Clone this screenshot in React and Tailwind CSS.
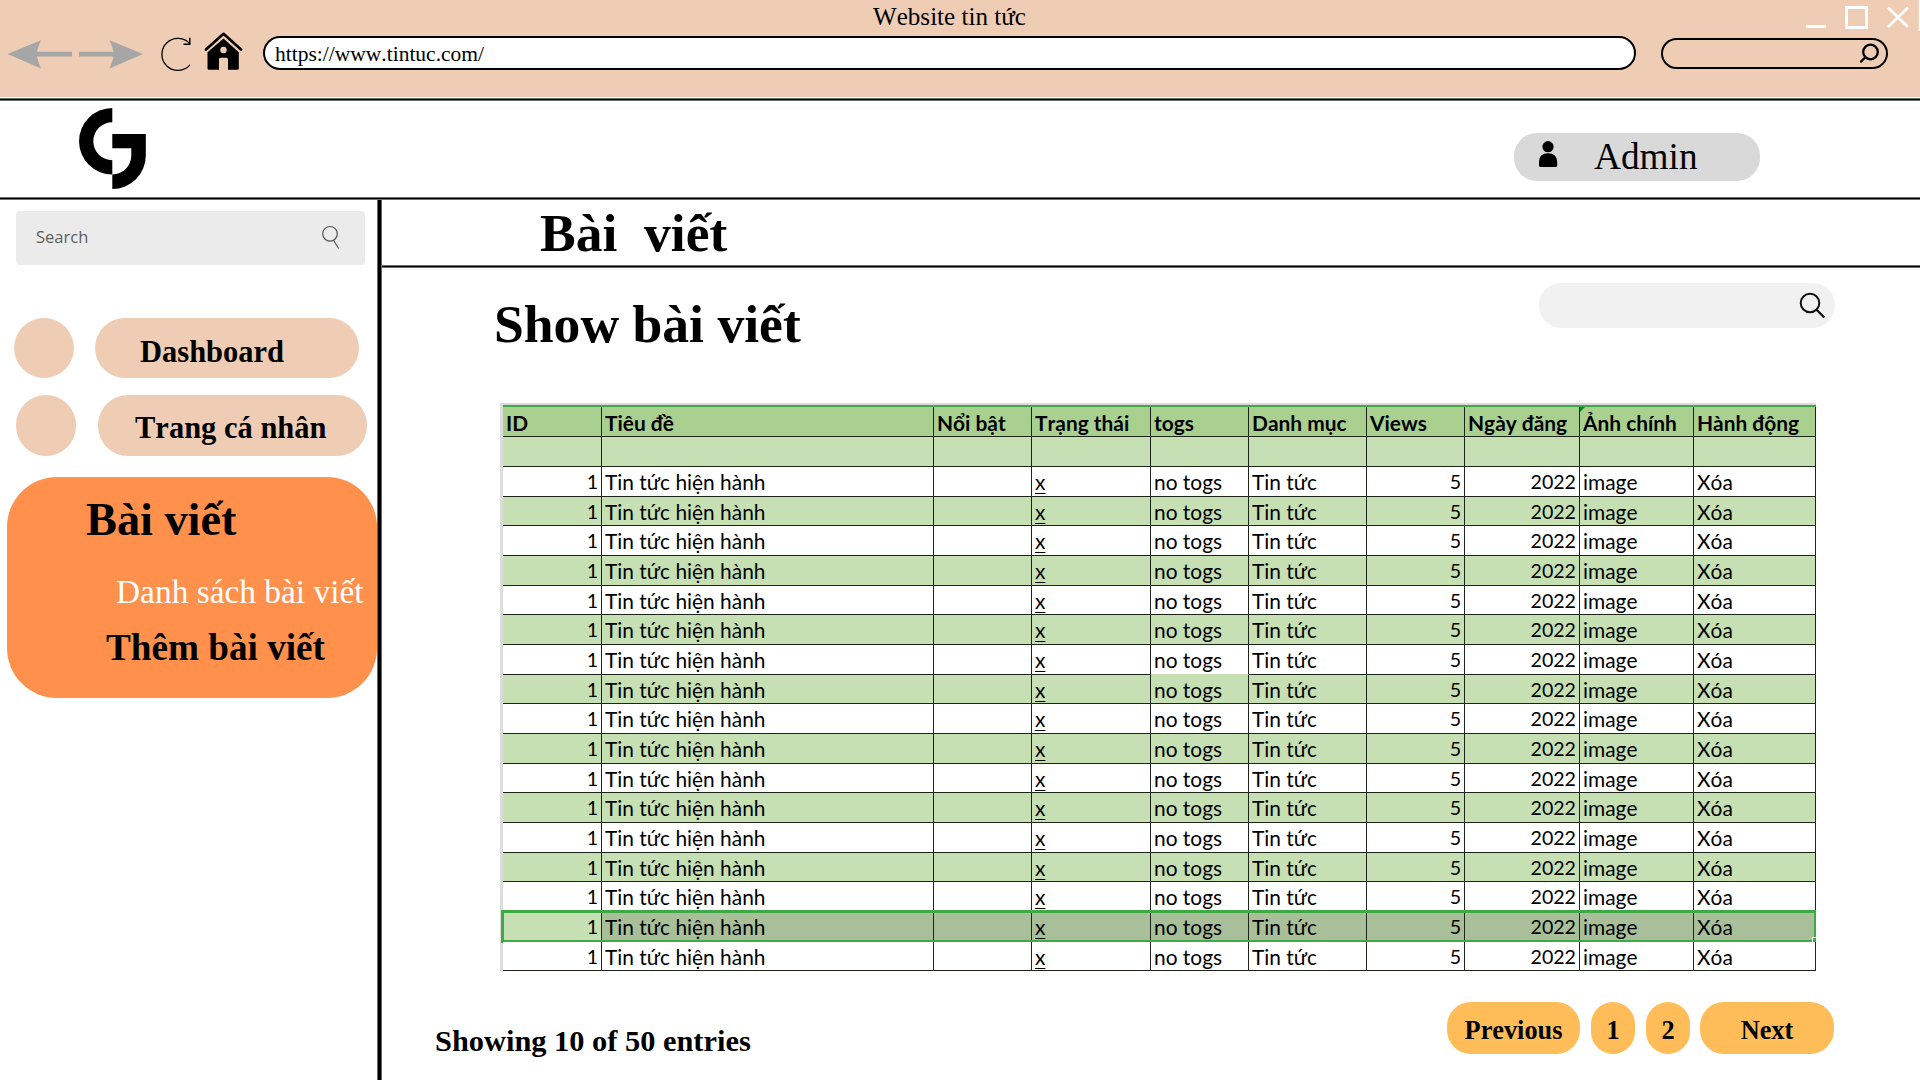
import React from "react";

const columns = [
  { label: "ID", value: "1", align: "text-right text-[19.6px]" },
  { label: "Tiêu đề", value: "Tin tức hiện hành" },
  { label: "Nổi bật", value: "" },
  { label: "Trạng thái", value: "x", underline: true },
  { label: "togs", value: "no togs" },
  { label: "Danh mục", value: "Tin tức" },
  { label: "Views", value: "5", align: "text-right text-[19.6px]" },
  { label: "Ngày đăng", value: "2022", align: "text-right text-[19.6px]" },
  { label: "Ảnh chính", value: "image", note: true },
  { label: "Hành động", value: "Xóa" },
];

const ROWS = 17;
const SELECTED = 15;
const GRID = "grid grid-rows-[100%] grid-cols-[99px_332px_98px_119px_98px_118px_98px_115px_114px_122px]";

// The "togs" cell above row 8 has no visible bottom rule.
const isOpenCell = (row, col) => row === 6 && col === 4;

function HLine() {
  return <div className="h-[3px] w-full shrink-0 border-y border-[#6b706b] bg-black" />;
}

function BrowserBar() {
  return (
    <div className="relative h-[97px] shrink-0 bg-[#efcdb5]">
      <div className="flex h-[36px] justify-between">
        <div className="w-[873px]" />
        <div className="pt-[3px] text-[25.1px] leading-[28px] whitespace-nowrap">Website tin tức</div>
        <svg className="ml-auto h-[34px] w-[120px]" viewBox="1800 0 120 34" fill="none" stroke="#fff">
          <path d="M1806 26.5h20" strokeWidth="3" />
          <rect x="1846.5" y="7.5" width="20" height="20" strokeWidth="3" />
          <path d="M1888 7.5l20 19.5M1908 7.5l-20 19.5" strokeWidth="2.6" />
          <path d="M1919.5 0v31" strokeWidth="1.4" />
        </svg>
      </div>
      <div className="flex h-[34px] items-center">
        <svg className="h-[44px] w-[263px] shrink-0" viewBox="0 30.5 263 44">
          <g fill="#a6a6a6">
            <path d="M7.500 53.500L41 39.800Q38 46 37 51.200H72V56H37Q38 61.500 41 68Z" />
            <path d="M143 53.500L109.500 39.800Q112.500 46 113.500 51.200H79V56H113.500Q112.500 61.500 109.500 68Z" />
          </g>
          <path d="M190 43.400A16 16 0 1 0 190 64.400" fill="none" stroke="#000" strokeWidth="1.3" />
          <path d="M189.800 37.300V43.800H183.500" fill="none" stroke="#000" strokeWidth="1.4" />
          <path d="M206 49L223.500 33.300L241 49" fill="none" stroke="#000" strokeWidth="2.700" strokeLinecap="round" strokeLinejoin="round" />
          <path fillRule="evenodd" d="M223.500 38L238.800 51.700V68Q238.800 69.300 237.500 69.300H228V59Q228 57.300 226.300 57.300H220.700Q219 57.300 219 59V69.300H209Q207.500 69.300 207.500 68V51.700ZM223.500 46.300a3.200 3.200 0 1 0 0 6.400a3.200 3.200 0 1 0 0-6.400Z" />
        </svg>
        <div className="h-[34px] w-[1373px] shrink-0 rounded-full border-2 border-black bg-white pl-[10px] text-[21.5px] leading-[33px]">
          https://www.tintuc.com/
        </div>
        <div className="ml-[25px] flex h-[31px] w-[227px] items-center justify-end rounded-full border-2 border-black pr-[5px]">
          <svg className="h-[22px] w-[22px]" viewBox="1859 42 22 22" fill="none" stroke="#000" strokeWidth="2.300" strokeLinecap="round">
            <circle cx="1870.500" cy="52" r="7.300" />
            <path d="M1865.300 57.300L1861 61.600" />
          </svg>
        </div>
      </div>
    </div>
  );
}

function SiteHeader() {
  return (
    <div className="flex h-[96px] shrink-0 items-start">
      <svg className="mt-[7px] ml-[79px] h-[81px] w-[67px]" viewBox="79 108 67 81">
        <path d="M112.300 108A33.250 33.250 0 0 0 112.300 174.500V160.200A19 19 0 0 1 112.300 122.200Z" />
        <path d="M112.300 134H145.800V155.500A33.500 33.500 0 0 1 112.300 189V174.500A19 19 0 0 0 131.300 155.500V148.300H112.300Z" />
      </svg>
      <div className="mt-[32px] ml-[1368px] flex h-[48px] w-[246px] rounded-[23px] bg-[#d9d9d9]">
        <svg className="mt-[7px] ml-[25px] h-[28px] w-[19px]" viewBox="1539 140 19 28">
          <circle cx="1548" cy="146.700" r="5.600" />
          <path d="M1539 165.500V162Q1539 153.200 1548 153.200T1557.200 162V165.500Q1557.200 167 1555.700 167H1540.500Q1539 167 1539 165.500Z" />
        </svg>
        <div className="ml-[36px] text-[37.300px] leading-[48px]">Admin</div>
      </div>
    </div>
  );
}

function Sidebar() {
  return (
    <div className="flex w-[377px] shrink-0 flex-col">
      <div className="mt-[11px] ml-[16px] flex h-[54px] w-[349px] items-center justify-between rounded-[4px] bg-[#ebebeb] pr-[25px] pl-[20px]">
        <span className="pb-[2px] font-['Open_Sans',sans-serif] text-[16.500px] leading-[24px] text-[#5e5e5e]">Search</span>
        <svg className="h-[26px] w-[20px]" viewBox="320 225.500 20 26" fill="none" stroke="#555" strokeWidth="1.200">
          <circle cx="330" cy="234.300" r="7.300" />
          <path d="M333.500 240.800L338.700 249" />
        </svg>
      </div>
      <div className="mt-[53px] flex h-[60px] font-bold">
        <div className="ml-[14px] h-[60px] w-[60px] rounded-full bg-[#efcdb5]" />
        <div className="ml-[21px] w-[264px] rounded-[30px] bg-[#efcdb5] pl-[45px] text-[30.500px] leading-[68px]">Dashboard</div>
      </div>
      <div className="mt-[17px] flex h-[61px] font-bold">
        <div className="ml-[16px] h-[61px] w-[60px] rounded-full bg-[#efcdb5]" />
        <div className="ml-[22px] w-[269px] rounded-[30px] bg-[#efcdb5] pl-[37px] text-[30.500px] leading-[67px] whitespace-nowrap">Trang cá nhân</div>
      </div>
      <div className="mt-[21px] ml-[7px] flex h-[221px] w-[370px] flex-col rounded-[50px] bg-[#ff914d] whitespace-nowrap">
        <div className="mt-[13px] ml-[79px] text-[46.300px] leading-[60px] font-bold">Bài viết</div>
        <div className="mt-[22px] ml-[109px] text-[33.400px] leading-[40px] text-white">Danh sách bài viết</div>
        <div className="mt-[16px] ml-[99px] text-[37.200px] leading-[40px] font-bold">Thêm bài viết</div>
      </div>
    </div>
  );
}

function ArticlesTable() {
  return (
    <div className="w-[1316px] border-t-2 border-l-[3px] border-[#dcdcdc]">
      <div className="relative border-t-2 border-[#3faa45] font-[Lato,Carlito,'Noto_Sans',sans-serif] text-[20.900px] leading-[29px]">
        <div className={`${GRID} h-[30px] bg-[#a9d08e] leading-[31px] font-bold`}>
          {columns.map((c) => (
            <div key={c.label} className="relative border-r border-b border-[#1c241a] pl-[3px] whitespace-nowrap">
              {c.label}
              {c.note && (
                <svg className="absolute top-0 left-0 h-[5px] w-[5px]" viewBox="0 0 5 5">
                  <path d="M0 0H5L0 5Z" fill="#0a8a1c" />
                </svg>
              )}
            </div>
          ))}
        </div>
        <div className={`${GRID} h-[30px] bg-[#c6e0b4]`}>
          {columns.map((c) => (
            <div key={c.label} className="border-r border-b border-[#1c241a]" />
          ))}
        </div>
        {Array.from({ length: ROWS }, (_, r) => (
          <div
            key={r}
            className={`${GRID} relative ${r % 3 === 1 ? "h-[29px]" : "h-[30px]"} ${r % 2 ? "bg-[#c6e0b4]" : "bg-white"}`}
          >
            {columns.map((c, i) => (
              <div
                key={c.label}
                className={`border-r border-b border-r-[#1c241a] px-[3px] whitespace-nowrap ${isOpenCell(r, i) ? "border-b-[#c6e0b4]" : "border-b-[#1c241a]"} ${c.align || ""} ${r === SELECTED && i > 0 ? "bg-[#a8bf99]" : ""}`}
              >
                {c.underline ? <span className="underline decoration-1 underline-offset-[3px]">{c.value}</span> : c.value}
              </div>
            ))}
            {r === SELECTED && (
              <div className="absolute -top-[2px] -left-[2px] h-[33px] w-[1315px] border-[3px] border-r-2 border-[#3faa45]">
                <div className="absolute -right-[2px] -bottom-[3px] h-[6px] w-[4px] border-t border-l border-white bg-[#3faa45]" />
              </div>
            )}
          </div>
        ))}
      </div>
    </div>
  );
}

function PageButton({ className, children }) {
  return (
    <div className={`h-[52px] rounded-[24px] bg-[#ffbd59] text-center text-[26.300px] leading-[57px] font-bold ${className}`}>
      {children}
    </div>
  );
}

export default function App() {
  return (
    <div className="flex h-[1080px] w-[1920px] flex-col overflow-hidden bg-white font-['Liberation_Serif',serif] text-black [font-kerning:none]">
      <BrowserBar />
      <div className="h-px shrink-0" />
      <HLine />
      <SiteHeader />
      <HLine />
      <div className="flex h-[880px]">
        <Sidebar />
        <div className="w-[5px] shrink-0 border-x border-[#666] bg-black" />
        <div className="flex flex-1 flex-col">
          <div className="h-[65px] pl-[158px] text-[53.500px] leading-[66px] font-bold whitespace-pre">Bài  viết</div>
          <HLine />
          <div className="flex h-[135px] justify-between">
            <div className="mt-[26px] ml-[112px] text-[53.600px] leading-[60px] font-bold">Show bài viết</div>
            <div className="mt-[15px] mr-[85px] flex h-[45px] w-[296px] items-center justify-end rounded-[22px] bg-[#f1f1f1] pr-[9px]">
              <svg className="h-[28px] w-[28px]" viewBox="1798 291.500 28 28" fill="none" stroke="#111" strokeWidth="2">
                <circle cx="1810" cy="302.500" r="9.300" />
                <path d="M1816.600 309.300L1824.300 317" strokeWidth="2.300" />
              </svg>
            </div>
          </div>
          <div className="pl-[118px]">
            <ArticlesTable />
          </div>
          <div className="mt-[31px] flex">
            <div className="mt-[19px] ml-[53px] text-[30.400px] leading-[40px] font-bold">Showing 10 of 50 entries</div>
            <div className="mr-[86px] ml-auto flex">
              <PageButton className="w-[133px]">Previous</PageButton>
              <PageButton className="ml-[11px] w-[44px]">1</PageButton>
              <PageButton className="ml-[11px] w-[44px]">2</PageButton>
              <PageButton className="ml-[10px] w-[134px]">Next</PageButton>
            </div>
          </div>
        </div>
      </div>
    </div>
  );
}
